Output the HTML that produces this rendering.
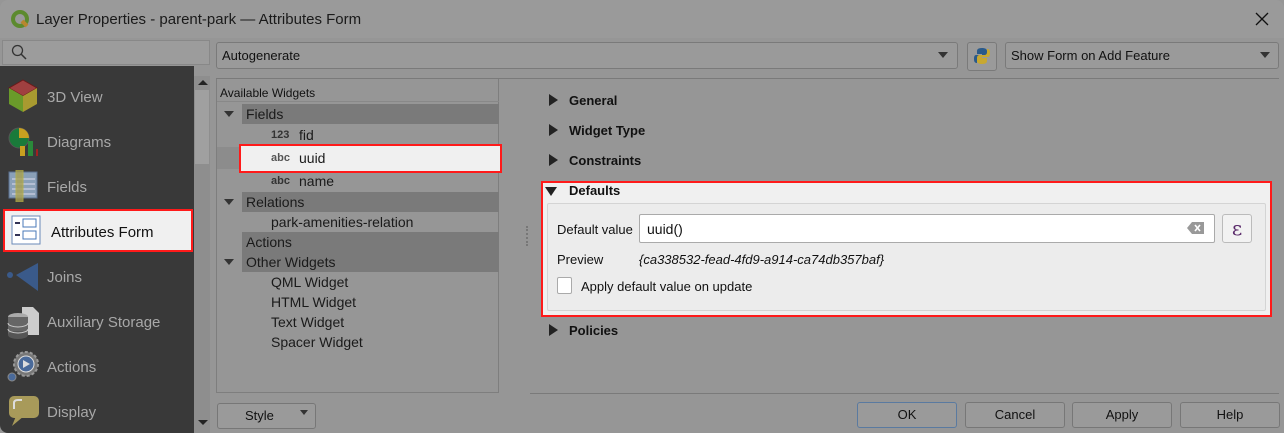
<!DOCTYPE html>
<html><head><meta charset="utf-8"><style>
*{margin:0;padding:0;box-sizing:border-box}
body{width:1284px;height:433px;overflow:hidden;background:#969696;font-family:"Liberation Sans",sans-serif;font-size:13px;color:#111;position:relative}
.a{position:absolute}
.side{color:#a8a8a8;font-size:15px}
.tree{font-size:14px;color:#1a1a1a}
.grp{background:#7a7a7a}
.btn{position:absolute;border:1px solid #777;border-radius:3px;background:#9a9a9a;text-align:center;line-height:24px;font-size:13px}
.sec{font-weight:bold;font-size:13px}
.tri{position:absolute;width:0;height:0;border-top:6px solid transparent;border-bottom:6px solid transparent;border-left:9px solid #222}
.tdn{position:absolute;width:0;height:0;border-left:5px solid transparent;border-right:5px solid transparent;border-top:6px solid #333}
</style></head><body>
<div class="a" style="left:0;top:0;width:1284px;height:38px;background:#9a9a9a;border-radius:8px 8px 0 0"></div>
<svg class="a" style="left:10px;top:9px" width="20" height="20"><circle cx="10" cy="10" r="7" fill="none" stroke="#5c8a2e" stroke-width="4"/><path d="M12 12 L17 17" stroke="#b8862e" stroke-width="4"/></svg>
<div class="a" style="left:36px;top:11px;font-size:15px;color:#1a1a1a">Layer Properties - parent-park — Attributes Form</div>
<svg class="a" style="left:1255px;top:12px" width="14" height="14"><path d="M1 1L13 13M13 1L1 13" stroke="#111" stroke-width="1.3"/></svg>
<!-- search -->
<div class="a" style="left:2px;top:40px;width:208px;height:25px;background:#9c9c9c;border:1px solid #888"></div>
<svg class="a" style="left:11px;top:44px" width="16" height="16"><circle cx="6.5" cy="6.5" r="5" fill="none" stroke="#333" stroke-width="1.3"/><path d="M10 10 L15 15" stroke="#333" stroke-width="1.5"/></svg>
<!-- sidebar -->
<div class="a" style="left:0;top:66px;width:194px;height:367px;background:#393939;border-radius:0 0 0 8px"></div>
<div class="a" style="left:194px;top:76px;width:16px;height:357px;background:#8e8e8e"></div>
<div class="a" style="left:195px;top:90px;width:14px;height:74px;background:#a0a0a0"></div>
<div class="a" style="left:198px;top:80px;border-left:5px solid transparent;border-right:5px solid transparent;border-bottom:5px solid #222"></div>
<div class="a" style="left:198px;top:420px;border-left:5px solid transparent;border-right:5px solid transparent;border-top:5px solid #222"></div>
<svg class="a" style="left:8px;top:79px" width="30" height="34"><path d="M15 1 L29 9 L15 17 L1 9Z" fill="#a04040" stroke="#6a1a1a"/><path d="M1 9 L15 17 L15 33 L1 25Z" fill="#6a9a2a"/><path d="M29 9 L15 17 L15 33 L29 25Z" fill="#a89a30"/></svg>
<div class="a side" style="left:47px;top:89px">3D View</div>
<svg class="a" style="left:8px;top:125px" width="30" height="32"><circle cx="11" cy="13" r="10" fill="#1a7a3a" stroke="#555"/><path d="M11 13 L11 3 A10 10 0 0 1 21 13Z" fill="#c8a020"/><rect x="12" y="21" width="5" height="10" fill="#c8a020"/><rect x="20" y="16" width="5" height="15" fill="#2a8a3a"/><rect x="28" y="24" width="2" height="7" fill="#a02020"/></svg>
<div class="a side" style="left:47px;top:134px">Diagrams</div>
<svg class="a" style="left:8px;top:170px" width="30" height="32"><rect x="1" y="2" width="28" height="26" fill="#8aa0b8" stroke="#5a7090"/><path d="M4 9H27M4 14H27M4 19H27M4 24H27" stroke="#dde" /><rect x="8" y="0" width="7" height="32" fill="#a8a050" stroke="#b8b040" opacity=".8"/></svg>
<div class="a side" style="left:47px;top:179px">Fields</div>
<div class="a" style="left:3px;top:209px;width:190px;height:43px;background:#f0f0f0;border:2px solid #ff1a1a"></div>
<svg class="a" style="left:11px;top:215px" width="30" height="30"><rect x="1" y="1" width="28" height="28" fill="#fff" stroke="#6a8ab8"/><rect x="4" y="7" width="5" height="2" fill="#335"/><rect x="4" y="19" width="5" height="2" fill="#335"/><rect x="12" y="4" width="13" height="8" fill="#fff" stroke="#4a7ab8"/><rect x="12" y="16" width="13" height="8" fill="#fff" stroke="#4a7ab8"/></svg>
<div class="a" style="left:51px;top:224px;font-size:15px;color:#111">Attributes Form</div>
<svg class="a" style="left:6px;top:262px" width="34" height="30"><circle cx="4" cy="13" r="3" fill="#3a5a8a"/><path d="M10 13 L32 1 L32 29Z" fill="#3a5a8a"/></svg>
<div class="a side" style="left:47px;top:269px">Joins</div>
<svg class="a" style="left:6px;top:305px" width="34" height="34"><path d="M16 2H27L33 8V30H16Z" fill="#ccc"/><ellipse cx="12" cy="12" rx="10" ry="4" fill="#aaa"/><rect x="2" y="12" width="20" height="18" fill="#666"/><ellipse cx="12" cy="30" rx="10" ry="4" fill="#555"/><path d="M2 18 A10 4 0 0 0 22 18M2 24 A10 4 0 0 0 22 24" stroke="#ccc" fill="none"/></svg>
<div class="a side" style="left:47px;top:314px">Auxiliary Storage</div>
<svg class="a" style="left:6px;top:349px" width="34" height="34"><circle cx="20" cy="15" r="12" fill="#777" stroke="#999" stroke-width="2" stroke-dasharray="3 2"/><circle cx="20" cy="15" r="8" fill="#4a6a9a" stroke="#ddd"/><path d="M17 11 L24 15 L17 19Z" fill="#ddd"/><circle cx="6" cy="28" r="4" fill="#4a6a9a" stroke="#888"/></svg>
<div class="a side" style="left:47px;top:359px">Actions</div>
<svg class="a" style="left:6px;top:394px" width="34" height="34"><rect x="3" y="2" width="30" height="22" rx="5" fill="#a89a5a"/><path d="M10 22 L6 32 L18 22Z" fill="#a89a5a"/><path d="M8 15 V9 Q8 6 12 6 H16" stroke="#ddd" fill="none" stroke-width="2"/></svg>
<div class="a side" style="left:47px;top:404px">Display</div>
<!-- top combos -->
<div class="a" style="left:216px;top:42px;width:742px;height:27px;background:#9a9a9a;border:1px solid #7a7a7a;border-radius:3px"></div>
<div class="a" style="left:222px;top:48px;font-size:13px">Autogenerate</div>
<div class="tdn" style="left:938px;top:52px"></div>
<div class="a" style="left:967px;top:42px;width:30px;height:29px;background:#9a9a9a;border:1px solid #7a7a7a;border-radius:3px"></div>
<svg class="a" style="left:973px;top:47px" width="18" height="18"><path d="M9 1 C4 1 4 3 4 5 V7 H9 V8 H3 C1 8 1 11 1 12 C1 15 2 16 4 16 V13 C4 11 5 10 7 10 H11 C13 10 14 9 14 7 V4 C14 2 12 1 9 1Z" fill="#2a5a8a"/><path d="M9 17 C14 17 14 15 14 13 V11 H9 V10 H15 C17 10 17 7 17 6 C17 3 16 2 14 2 V5 C14 7 13 8 11 8 H7 C5 8 4 9 4 11 V14 C4 16 6 17 9 17Z" fill="#c8a830"/></svg>
<div class="a" style="left:1005px;top:42px;width:274px;height:27px;background:#9a9a9a;border:1px solid #7a7a7a;border-radius:3px"></div>
<div class="a" style="left:1011px;top:48px;font-size:13px">Show Form on Add Feature</div>
<div class="tdn" style="left:1260px;top:52px"></div>
<div class="a" style="left:216px;top:78px;width:1063px;height:1px;background:#7a7a7a"></div>
<!-- tree -->
<div class="a" style="left:216px;top:79px;width:283px;height:314px;border:1px solid #7e7e7e;border-top:none"></div>
<div class="a" style="left:220px;top:86px;font-size:12px;color:#111">Available Widgets</div>
<div class="a" style="left:217px;top:101px;width:282px;height:1px;background:#888"></div>
<div class="a grp" style="left:242px;top:104px;width:257px;height:20px"></div>
<div class="tdn" style="left:224px;top:111px"></div>
<div class="a tree" style="left:246px;top:106px">Fields</div>
<div class="a" style="left:271px;top:129px;font-size:11px;font-weight:bold;color:#333">123</div>
<div class="a tree" style="left:299px;top:127px">fid</div>
<div class="a" style="left:217px;top:147px;width:282px;height:22px;background:#8c8c8c"></div>
<div class="a" style="left:239px;top:144px;width:263px;height:29px;background:#f0f0f0;border:2px solid #ff1a1a"></div>
<div class="a" style="left:271px;top:152px;font-size:11px;font-weight:bold;color:#555">abc</div>
<div class="a tree" style="left:299px;top:150px">uuid</div>
<div class="a" style="left:271px;top:175px;font-size:11px;font-weight:bold;color:#333">abc</div>
<div class="a tree" style="left:299px;top:173px">name</div>
<div class="a grp" style="left:242px;top:192px;width:257px;height:20px"></div>
<div class="tdn" style="left:224px;top:199px"></div>
<div class="a tree" style="left:246px;top:194px">Relations</div>
<div class="a tree" style="left:271px;top:214px">park-amenities-relation</div>
<div class="a grp" style="left:242px;top:232px;width:257px;height:40px"></div>
<div class="a tree" style="left:246px;top:234px">Actions</div>
<div class="tdn" style="left:224px;top:259px"></div>
<div class="a tree" style="left:246px;top:254px">Other Widgets</div>
<div class="a tree" style="left:271px;top:274px">QML Widget</div>
<div class="a tree" style="left:271px;top:294px">HTML Widget</div>
<div class="a tree" style="left:271px;top:314px">Text Widget</div>
<div class="a tree" style="left:271px;top:334px">Spacer Widget</div>
<div class="btn" style="left:217px;top:403px;width:99px;height:26px;text-align:left;padding-left:27px">Style</div>
<div class="tdn" style="left:300px;top:410px;border-top-width:5px;border-left-width:4px;border-right-width:4px"></div>
<div class="a" style="left:526px;top:226px;width:2px;height:20px;border-left:2px dotted #777"></div>
<!-- right -->
<div class="tri" style="left:549px;top:94px"></div><div class="a sec" style="left:569px;top:93px">General</div>
<div class="tri" style="left:549px;top:124px"></div><div class="a sec" style="left:569px;top:123px">Widget Type</div>
<div class="tri" style="left:549px;top:154px"></div><div class="a sec" style="left:569px;top:153px">Constraints</div>
<div class="a" style="left:541px;top:181px;width:731px;height:136px;background:#f0f0f0;border:2px solid #ff1a1a"></div>
<div class="a" style="left:545px;top:187px;border-left:6px solid transparent;border-right:6px solid transparent;border-top:9px solid #222"></div>
<div class="a sec" style="left:569px;top:183px">Defaults</div>
<div class="a" style="left:547px;top:203px;width:719px;height:108px;background:#ececec;border:1px solid #d4d4d4;border-radius:2px"></div>
<div class="a" style="left:557px;top:222px;font-size:13px">Default value</div>
<div class="a" style="left:639px;top:214px;width:576px;height:29px;background:#fff;border:1px solid #aaa;border-radius:2px"></div>
<div class="a" style="left:647px;top:221px;font-size:14px">uuid()</div>
<svg class="a" style="left:1187px;top:221px" width="18" height="14"><path d="M5 1H17V13H5L0 7Z" fill="#999"/><path d="M8 4L13 10M13 4L8 10" stroke="#fff" stroke-width="1.6"/></svg>
<div class="a" style="left:1222px;top:214px;width:30px;height:29px;background:#f2f2f2;border:1px solid #bbb;border-radius:3px;text-align:center;font-size:20px;line-height:26px;color:#5a2a6a;font-family:'DejaVu Serif',serif">ε</div>
<div class="a" style="left:557px;top:252px;font-size:13px">Preview</div>
<div class="a" style="left:639px;top:252px;font-size:13px;font-style:italic">{ca338532-fead-4fd9-a914-ca74db357baf}</div>
<div class="a" style="left:557px;top:277px;width:15px;height:17px;background:#fff;border:1px solid #aaa;border-radius:2px"></div>
<div class="a" style="left:581px;top:279px;font-size:13px">Apply default value on update</div>
<div class="tri" style="left:549px;top:324px"></div><div class="a sec" style="left:569px;top:323px">Policies</div>
<div class="a" style="left:530px;top:393px;width:749px;height:1px;background:#7a7a7a"></div>
<div class="btn" style="left:857px;top:402px;width:100px;height:26px;border-color:#5a7aa0">OK</div>
<div class="btn" style="left:965px;top:402px;width:100px;height:26px">Cancel</div>
<div class="btn" style="left:1072px;top:402px;width:100px;height:26px">Apply</div>
<div class="btn" style="left:1180px;top:402px;width:100px;height:26px">Help</div>
</body></html>
